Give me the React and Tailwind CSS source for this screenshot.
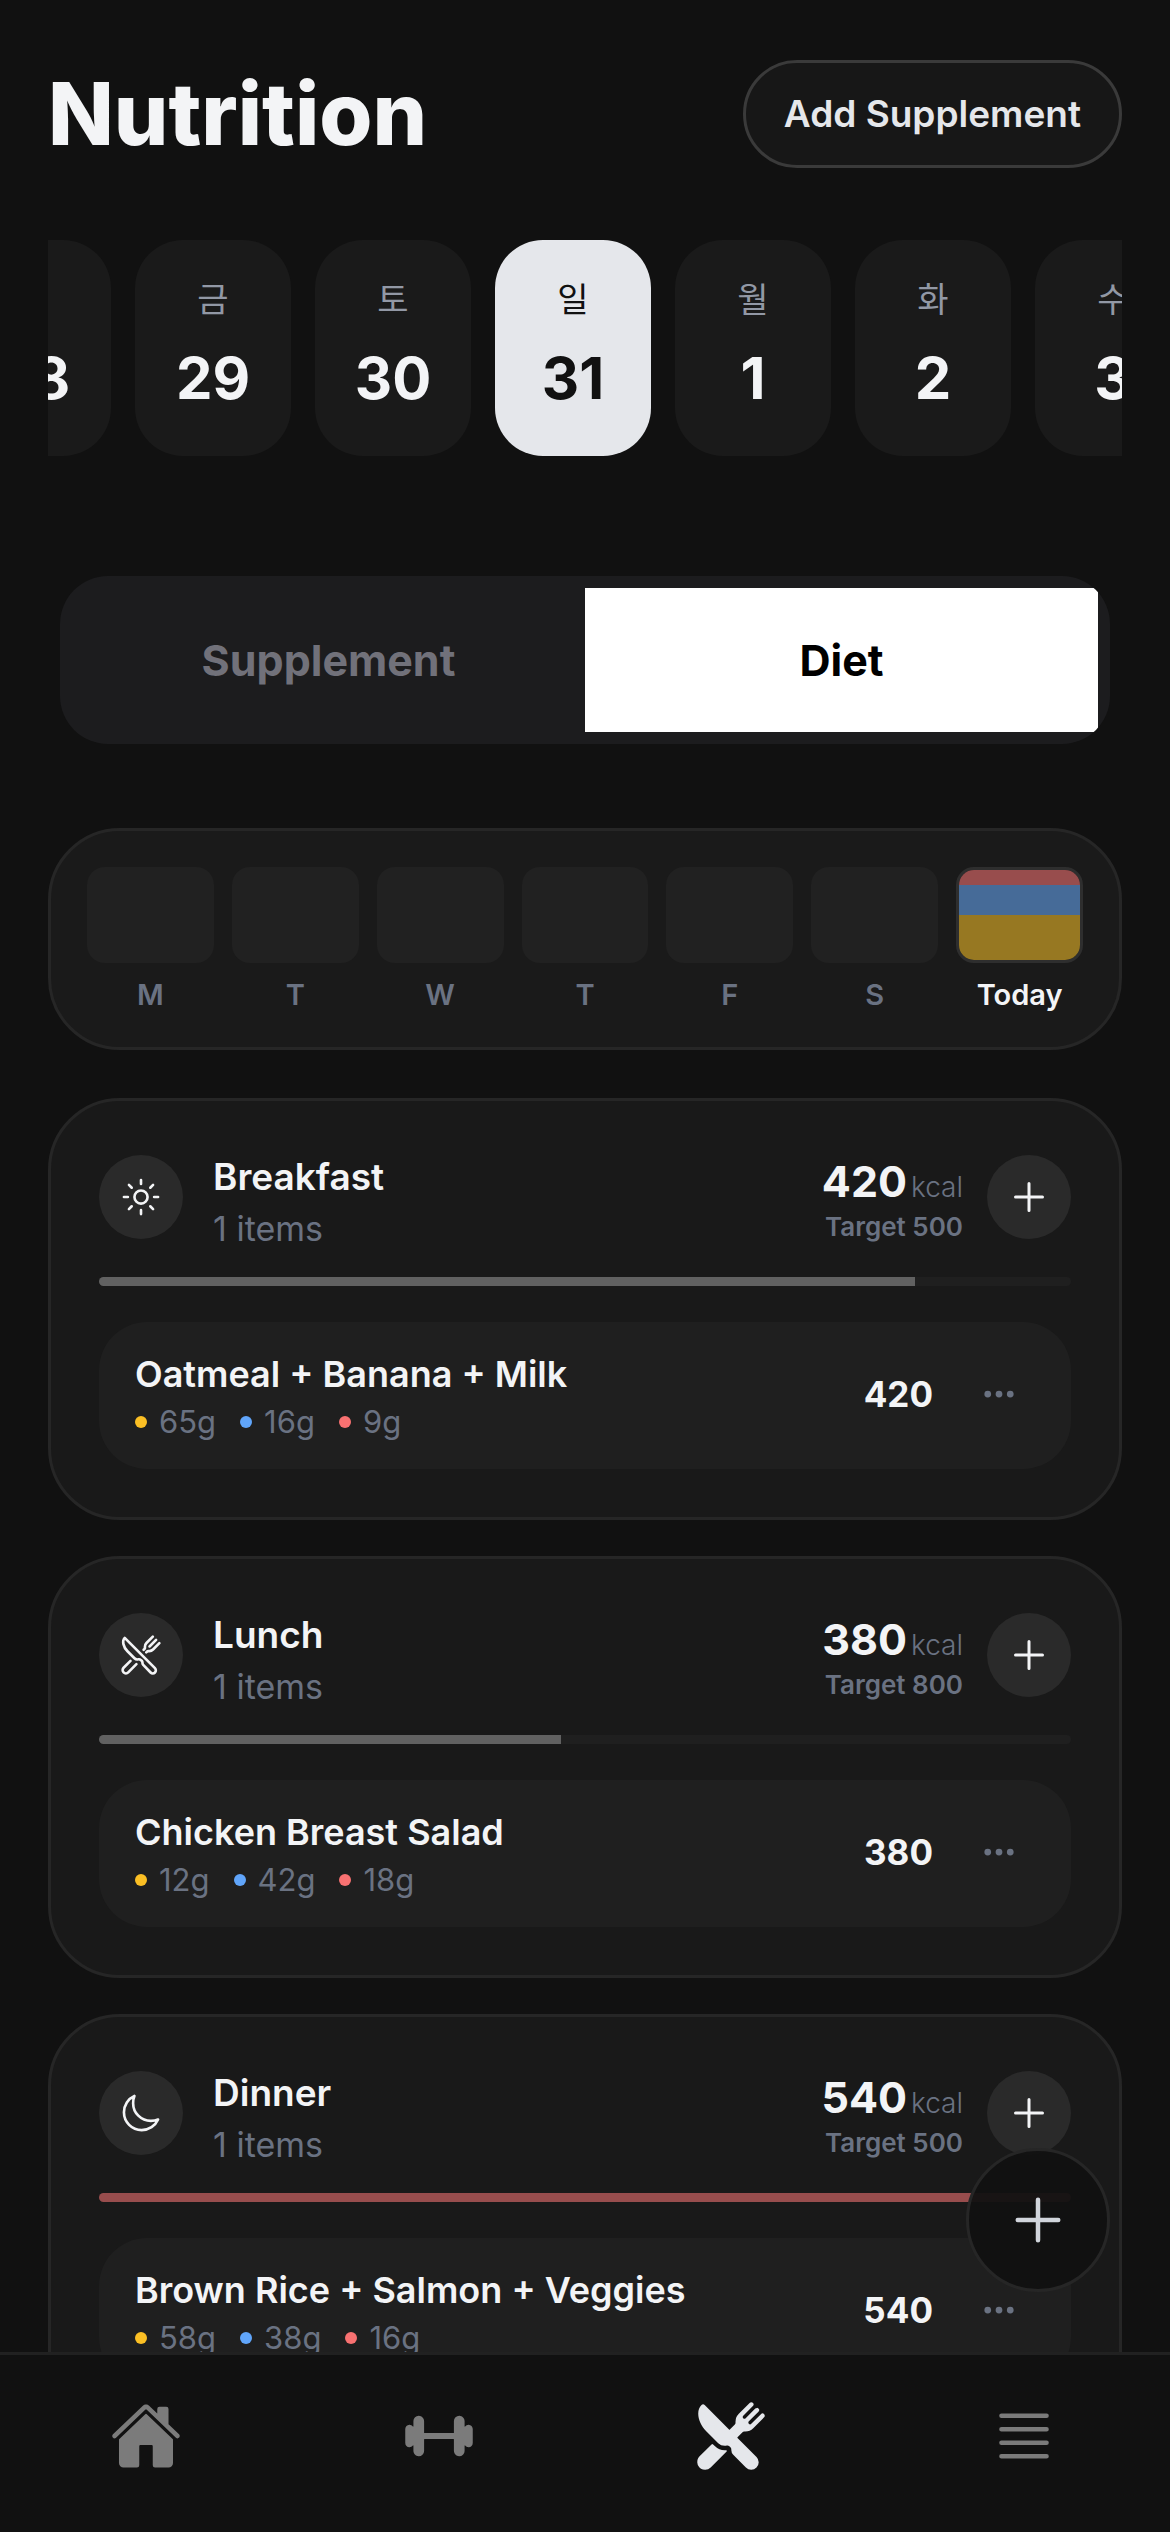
import React, { useState, useEffect, useRef } from 'react';
import {
  IoAdd,
  IoBarbell,
  IoEllipsisHorizontal,
  IoHome,
  IoMoonOutline,
  IoRestaurant,
  IoRestaurantOutline,
  IoSunnyOutline,
} from 'react-icons/io5';

const MenuIcon = ({ size }) => (
  <svg width={size} height={size} viewBox="0 0 512 512" fill="none" stroke="currentColor" strokeWidth="33" strokeLinecap="round">
    <path d="M96 112h320M96 208h320M96 304h320M96 400h320" />
  </svg>
);

const days = [
  { label: '목', date: 28 },
  { label: '금', date: 29 },
  { label: '토', date: 30 },
  { label: '일', date: 31 },
  { label: '월', date: 1 },
  { label: '화', date: 2 },
  { label: '수', date: 3 },
];

const week = ['M', 'T', 'W', 'T', 'F', 'S', 'Today'];

const meals = [
  {
    name: 'Breakfast',
    icon: IoSunnyOutline,
    target: 500,
    items: [{ name: 'Oatmeal + Banana + Milk', kcal: 420, carbs: 65, protein: 16, fat: 9 }],
  },
  {
    name: 'Lunch',
    icon: IoRestaurantOutline,
    target: 800,
    items: [{ name: 'Chicken Breast Salad', kcal: 380, carbs: 12, protein: 42, fat: 18 }],
  },
  {
    name: 'Dinner',
    icon: IoMoonOutline,
    target: 500,
    items: [{ name: 'Brown Rice + Salmon + Veggies', kcal: 540, carbs: 58, protein: 38, fat: 16 }],
  },
];

const navItems = [
  { name: 'Home', icon: IoHome },
  { name: 'Workout', icon: IoBarbell },
  { name: 'Nutrition', icon: IoRestaurant },
  { name: 'Menu', icon: MenuIcon },
];

const DayStrip = () => {
  const [selected, setSelected] = useState(31);
  const stripRef = useRef(null);

  useEffect(() => {
    stripRef.current.scrollLeft = 93;
  }, []);

  return (
    <div ref={stripRef} className="mt-18 flex gap-6 overflow-x-auto [scrollbar-width:none]">
      {days.map((day) => {
        const active = day.date === selected;
        return (
          <button
            key={day.date}
            onClick={() => setSelected(day.date)}
            className={`flex h-54 w-39 shrink-0 flex-col items-center rounded-[48px] pt-9 ${
              active ? 'bg-[#e5e7eb] text-[#111111]' : 'bg-[#1a1a1a] text-gray-100'
            }`}
          >
            <span className={`text-[34px] leading-12 ${active ? 'text-[#111111]' : 'text-[#9298a5]'}`}>
              {day.label}
            </span>
            <span className="mt-6 text-[58px] leading-[60px] font-bold">{day.date}</span>
          </button>
        );
      })}
    </div>
  );
};

const Macro = ({ color, value }) => (
  <span className="flex items-center gap-3">
    <span className={`h-3 w-3 rounded-full ${color}`}></span>
    {value}g
  </span>
);

const MealCard = ({ meal }) => {
  const total = meal.items.reduce((sum, item) => sum + item.kcal, 0);
  const percent = Math.min((total / meal.target) * 100, 100);
  const Icon = meal.icon;

  return (
    <section className="rounded-[72px] border-3 border-[#262626] bg-[#191919] p-12">
      <div className="flex items-center">
        <div className="flex h-21 w-21 items-center justify-center rounded-full bg-[#2a2a2a] text-gray-100">
          <Icon size={42} />
        </div>
        <div className="ml-[30px] flex-1">
          <h2 className="text-[37px] leading-14 font-semibold text-gray-100">{meal.name}</h2>
          <p className="mt-2 text-[34px] leading-8 text-gray-500">{meal.items.length} items</p>
        </div>
        <div className="mr-6 text-right">
          <p className="flex items-baseline justify-end gap-1 text-[43px] leading-[60px] font-bold text-gray-100">
            {total}
            <span className="text-[28px] leading-8 font-light text-gray-500">kcal</span>
          </p>
          <p className="text-[26px] leading-8 font-semibold text-gray-500">Target {meal.target}</p>
        </div>
        <button
          aria-label={`Add to ${meal.name}`}
          className="flex h-21 w-21 items-center justify-center rounded-full bg-[#2a2a2a] text-gray-100"
        >
          <IoAdd size={48} />
        </button>
      </div>

      <div className="mt-8 h-[9px] overflow-hidden rounded-full bg-[#1f1f1f]">
        <div
          className={`h-full ${total > meal.target ? 'bg-[#984d4d]' : 'bg-[#616161]'}`}
          style={{ width: `${percent}%` }}
        ></div>
      </div>

      {meal.items.map((item) => (
        <div key={item.name} className="mt-9 flex items-center rounded-[48px] bg-[#1f1f1f] px-9 pt-6 pb-[27px]">
          <div className="flex-1">
            <h3 className="text-[36px] leading-14 font-semibold text-gray-100">{item.name}</h3>
            <div className="flex gap-6 text-[31px] leading-10 text-gray-500">
              <Macro color="bg-[#fbbf24]" value={item.carbs} />
              <Macro color="bg-[#60a5fa]" value={item.protein} />
              <Macro color="bg-[#f87171]" value={item.fat} />
            </div>
          </div>
          <span className="text-[35px] leading-12 font-bold text-gray-100">{item.kcal}</span>
          <button aria-label={`Options for ${item.name}`} className="ml-[30px] px-[18px] text-gray-500">
            <IoEllipsisHorizontal size={36} />
          </button>
        </div>
      ))}
    </section>
  );
};

const App = () => {
  const [tab, setTab] = useState('Diet');

  return (
    <div className="relative flex h-screen flex-col bg-[#111111] font-['Inter','Noto_Sans_CJK_KR',sans-serif]">
      <main className="min-h-0 flex-1 overflow-y-auto px-12 pt-15 pb-12 [scrollbar-width:none]">
        <header className="flex items-center justify-between">
          <h1 className="text-[86px] leading-[108px] font-extrabold text-gray-100">Nutrition</h1>
          <button className="h-27 rounded-full border-3 border-[#3a3a3a] bg-[#171717] px-[38px] text-[37px] font-semibold text-gray-200">
            Add Supplement
          </button>
        </header>

        <DayStrip />

        <div className="mx-3 mt-30 flex overflow-hidden rounded-[48px] bg-[#1c1c1e] p-3">
          {['Supplement', 'Diet'].map((name) => (
            <button
              key={name}
              onClick={() => setTab(name)}
              className={`h-36 flex-1 text-[43px] font-bold ${
                tab === name ? 'bg-white text-black' : 'text-[#71717a]'
              }`}
            >
              {name}
            </button>
          ))}
        </div>

        <section className="mt-21 flex gap-[18px] rounded-[72px] border-3 border-[#262626] bg-[#1a1a1a] p-9">
          {week.map((label, i) => (
            <div key={i} className="min-w-0 flex-1 text-center">
              {label === 'Today' ? (
                <div className="flex h-24 flex-col overflow-hidden rounded-[18px] border-3 border-[#2e2e2e]">
                  <div className="flex-1 bg-[#984d4d]"></div>
                  <div className="flex-2 bg-[#466b98]"></div>
                  <div className="flex-3 bg-[#977822]"></div>
                </div>
              ) : (
                <div className="h-24 rounded-[18px] bg-[#212121]"></div>
              )}
              <p
                className={`mt-4 text-[29px] leading-8 font-semibold ${
                  label === 'Today' ? 'text-gray-100' : 'text-gray-500'
                }`}
              >
                {label}
              </p>
            </div>
          ))}
        </section>

        <div className="mt-12 flex flex-col gap-9">
          {meals.map((meal) => (
            <MealCard key={meal.name} meal={meal} />
          ))}
        </div>
      </main>

      <button
        aria-label="Add food"
        className="absolute right-15 bottom-60 flex h-36 w-36 items-center justify-center rounded-full border-3 border-[#262626] bg-[#111111]/95 text-gray-300"
      >
        <IoAdd size={72} />
      </button>

      <nav className="flex h-45 border-t-3 border-[#212121] bg-[#111111] pt-[45px]">
        {navItems.map((item) => (
          <a
            key={item.name}
            href={`#${item.name.toLowerCase()}`}
            aria-label={item.name}
            className={`flex flex-1 justify-center ${item.name === 'Nutrition' ? 'text-[#e5e7eb]' : 'text-[#7b7b7b]'}`}
          >
            <item.icon size={72} />
          </a>
        ))}
      </nav>
    </div>
  );
};

export default App;
